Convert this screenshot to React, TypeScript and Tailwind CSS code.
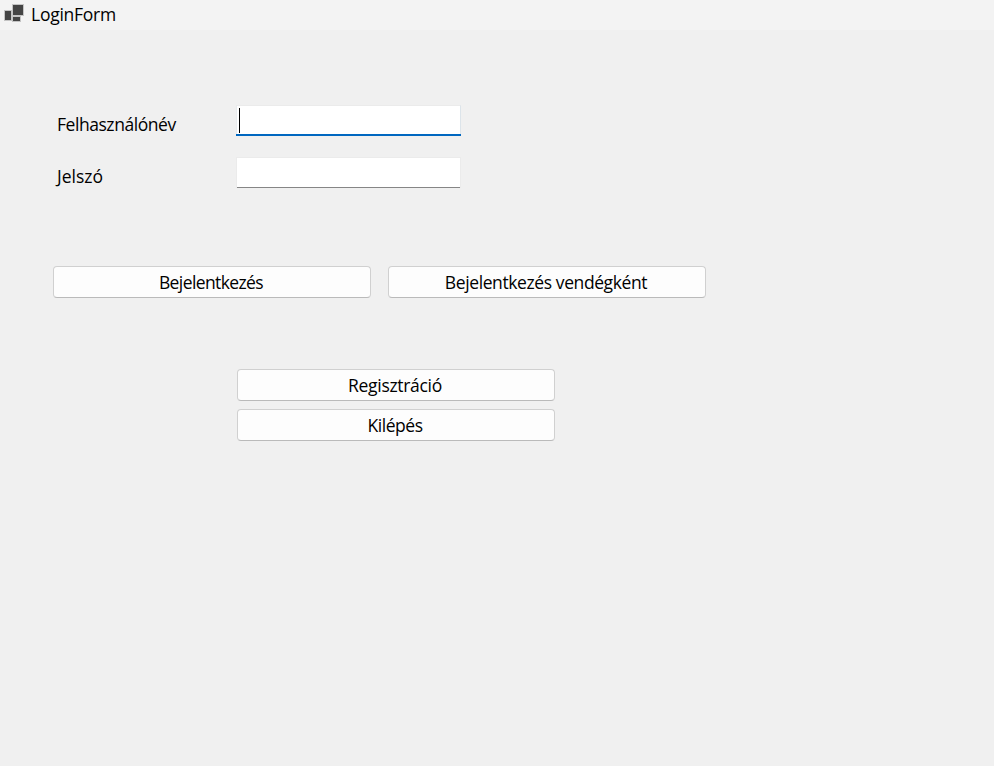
import type { ReactNode } from "react";

function FormButton({ children, tracking }: { children: ReactNode; tracking: string }) {
  return (
    <button
      type="button"
      className={`flex h-8 w-[318px] items-center justify-center rounded border border-[#d0d0d0] border-b-[#bababa] bg-[#fdfdfd] pr-0.5 leading-6 ${tracking}`}
    >
      {children}
    </button>
  );
}

export default function App() {
  return (
    <div className="flex h-[766px] w-[994px] flex-col overflow-hidden bg-[#f0f0f0] font-['Segoe_UI','Open_Sans','Noto_Sans',sans-serif] text-[17.5px] text-black">
      <header className="flex h-[30px] shrink-0 items-center bg-[#f3f3f3] pl-1">
        <svg width="20" height="20" viewBox="0 0 20 20" className="-mt-1 shrink-0" shapeRendering="crispEdges">
          <path d="M8 1h12v12H8zM0 7h8v11H0zM8 13h9v6H8z" fill="#c4c4c4" />
          <path d="M9 2h10v10H9zM1 8h6v9H1zM9 14h7v4H9z" fill="#444444" />
        </svg>
        <h1 className="-mt-0.5 ml-[7px] tracking-[-0.25px]">LoginForm</h1>
      </header>
      <main className="pt-[75px]">
        <div className="flex h-[52px] pl-[57px]">
          <label className="w-[179px] pt-[7px] leading-6 tracking-[-0.45px]">Felhasználónév</label>
          <div className="h-[31px] w-[225px] border-b-2 border-[#0067c0]">
            <div className="h-[29px] border-x border-t border-x-[#e8ebee] border-t-[#ebebeb] border-r-[#dce4ea] bg-white pt-0.5 pl-0.5">
              <div className="h-[25px] w-px bg-black" />
            </div>
          </div>
        </div>
        <div className="flex h-[31px] pl-[57px]">
          <label className="w-[179px] pt-[7px] leading-6 tracking-[0px]">Jelszó</label>
          <div className="h-[31px] w-[225px] border-x border-[#ebebeb]">
            <div className="h-[31px] border-t border-b border-t-[#ebebeb] border-b-[#868686] bg-white" />
          </div>
        </div>
        <div className="mt-[78px] flex gap-[17px] pl-[53px]">
          <FormButton tracking="tracking-[-0.6px]">Bejelentkezés</FormButton>
          <FormButton tracking="tracking-[-0.4px]">Bejelentkezés vendégként</FormButton>
        </div>
        <div className="mt-[71px] flex flex-col gap-2 pl-[237px]">
          <FormButton tracking="tracking-[-0.3px]">Regisztráció</FormButton>
          <FormButton tracking="tracking-[-0.45px]">Kilépés</FormButton>
        </div>
      </main>
    </div>
  );
}
